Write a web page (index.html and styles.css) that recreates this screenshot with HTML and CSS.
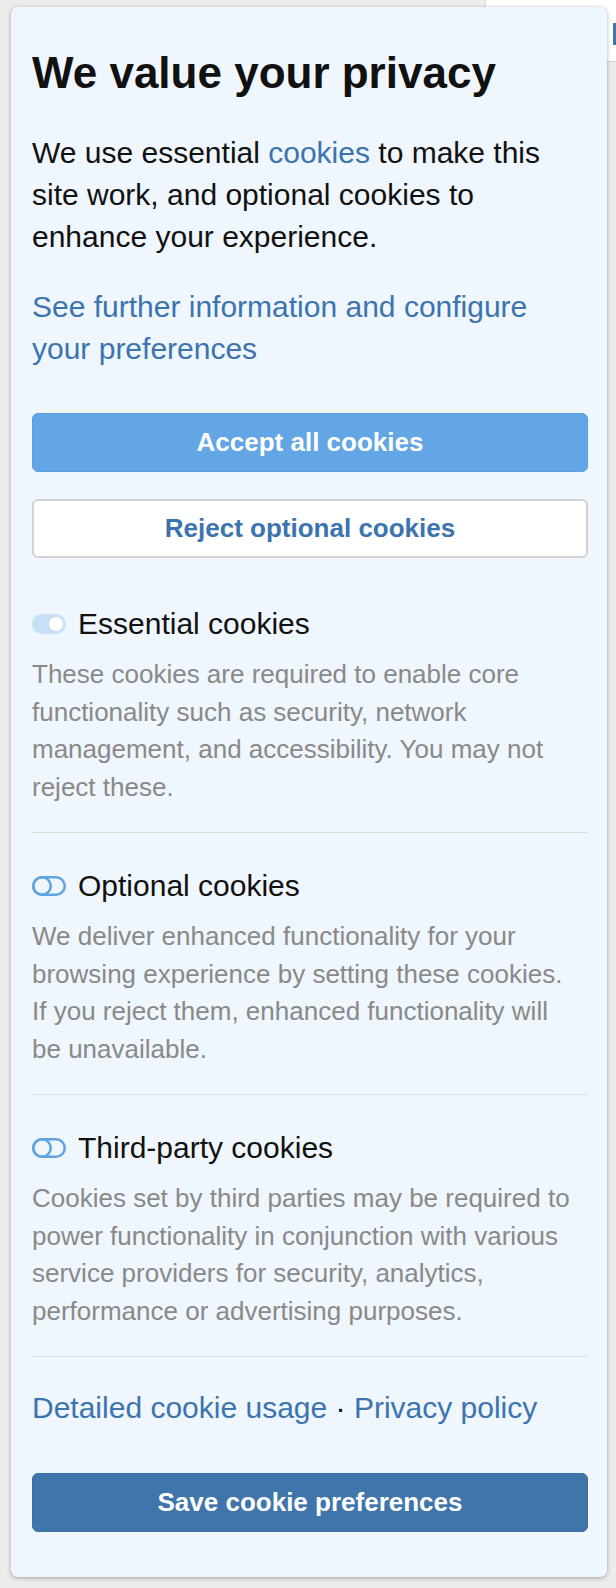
FILE: index.html
```html
<!DOCTYPE html>
<html lang="en">
<head>
<meta charset="utf-8">
<title>We value your privacy</title>
<link rel="stylesheet" href="styles.css">
</head>
<body>
<div class="page-behind"><span class="page-mark"></span></div>
<section class="consent" aria-labelledby="consent-title">
  <h1 id="consent-title" class="consent-title">We value your privacy</h1>
  <p class="intro">We use essential <a href="#" class="link">cookies</a> to make this site work, and optional cookies to enhance your experience.</p>
  <p class="more"><a href="#" class="link">See further information and configure your preferences</a></p>
  <div class="actions">
    <button class="btn btn-accept" type="button">Accept all cookies</button>
    <button class="btn btn-reject" type="button">Reject optional cookies</button>
  </div>

  <div class="category">
    <div class="category-head">
      <svg class="toggle" width="34" height="20" viewBox="0 0 34 20" aria-hidden="true">
        <rect x="0" y="0" width="34" height="20" rx="10" fill="#c5e0f7"/>
        <circle cx="24" cy="10" r="7" fill="#ffffff"/>
      </svg>
      <span class="category-name">Essential cookies</span>
    </div>
    <p class="category-desc">These cookies are required to enable core functionality such as security, network management, and accessibility. You may not reject these.</p>
  </div>

  <div class="category">
    <div class="category-head">
      <svg class="toggle" width="34" height="20" viewBox="0 0 34 20" aria-hidden="true">
        <rect x="1.25" y="1.25" width="31.5" height="17.5" rx="8.75" fill="none" stroke="#5fa3e3" stroke-width="2.5"/>
        <circle cx="10" cy="10" r="8.75" fill="none" stroke="#5fa3e3" stroke-width="2.5"/>
      </svg>
      <span class="category-name">Optional cookies</span>
    </div>
    <p class="category-desc">We deliver enhanced functionality for your browsing experience by setting these cookies. If you reject them, enhanced functionality will be unavailable.</p>
  </div>

  <div class="category">
    <div class="category-head">
      <svg class="toggle" width="34" height="20" viewBox="0 0 34 20" aria-hidden="true">
        <rect x="1.25" y="1.25" width="31.5" height="17.5" rx="8.75" fill="none" stroke="#5fa3e3" stroke-width="2.5"/>
        <circle cx="10" cy="10" r="8.75" fill="none" stroke="#5fa3e3" stroke-width="2.5"/>
      </svg>
      <span class="category-name">Third-party cookies</span>
    </div>
    <p class="category-desc">Cookies set by third parties may be required to power functionality in conjunction with various service providers for security, analytics, performance or advertising purposes.</p>
  </div>

  <p class="footer-links"><a href="#" class="link">Detailed cookie usage</a> · <a href="#" class="link">Privacy policy</a></p>
  <button class="btn btn-save" type="button">Save cookie preferences</button>
</section>
</body>
</html>
```
FILE: styles.css
```css
html, body {
  margin: 0;
  padding: 0;
}
body {
  background: #ececec;
  font-family: "Liberation Sans", Arial, Helvetica, sans-serif;
  color: #111111;
  position: relative;
  min-height: 1588px;
}
.page-behind {
  position: absolute;
  top: 0;
  left: 485px;
  right: 0;
  height: 61px;
  background: #ffffff;
  border-left: 1px solid #d8d8d8;
  border-bottom: 1px solid #d6d6d6;
  z-index: 0;
}
.page-mark {
  position: absolute;
  left: 127px;
  top: 23px;
  width: 4px;
  height: 22px;
  background: #3f75aa;
}
.consent {
  position: relative;
  z-index: 1;
  margin: 7px 0 0 11px;
  width: 596px;
  box-sizing: border-box;
  padding: 39px 19px 45px 21px;
  background: #eff6fd;
  border-radius: 7px;
  box-shadow: 0 1px 4px rgba(0, 0, 0, 0.32);
}
.consent-title {
  margin: 0 0 33px;
  font-size: 44px;
  line-height: 53px;
  font-weight: 700;
  color: #111111;
}
.intro,
.more {
  margin: 0;
  font-size: 30px;
  line-height: 42px;
}
.intro {
  margin-bottom: 28px;
}
.more {
  margin-bottom: 43px;
}
.link {
  color: #3b74ae;
  text-decoration: none;
}
.actions {
  display: flex;
  flex-direction: column;
  gap: 27px;
  margin-bottom: 13px;
}
.btn {
  display: block;
  width: 100%;
  height: 59px;
  border-radius: 6px;
  font-family: "Liberation Sans", Arial, Helvetica, sans-serif;
  font-size: 26px;
  font-weight: 700;
  cursor: pointer;
  box-sizing: border-box;
}
.btn-accept {
  background: #62a6e5;
  border: 1px solid #5b9edd;
  color: #ffffff;
}
.btn-reject {
  background: #ffffff;
  border: 2px solid #d2d2d2;
  color: #3b74ae;
}
.btn-save {
  background: #3f75aa;
  border: 1px solid #3a6ea2;
  color: #ffffff;
  margin-top: 44px;
}
.category {
  padding: 32px 0 26px;
  border-bottom: 1px solid #dcdcdc;
}
.category-head {
  display: flex;
  align-items: center;
  gap: 12px;
  font-size: 30px;
  line-height: 42px;
  color: #111111;
}
.toggle {
  flex: none;
  display: block;
}
.category-desc {
  margin: 11px 0 0;
  padding-right: 8px;
  font-size: 26px;
  line-height: 37.5px;
  color: #898989;
}
.footer-links {
  margin: 30px 0 0;
  font-size: 30px;
  line-height: 42px;
  color: #111111;
}
```
